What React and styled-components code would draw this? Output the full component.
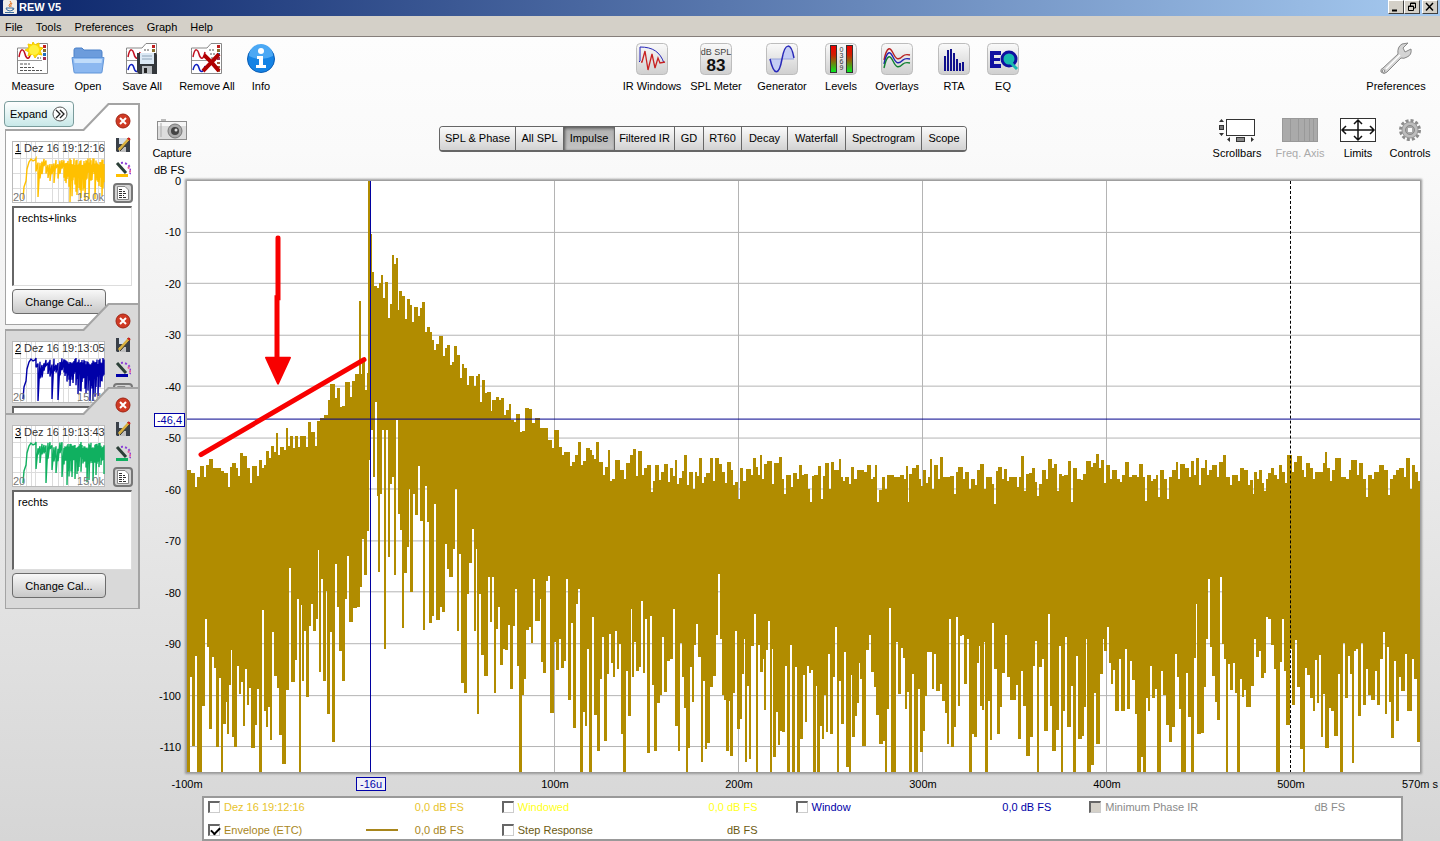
import React, { useState } from 'react';
import styled, { createGlobalStyle, css } from 'styled-components';

const GOLD = '#b18c00';
const FLOOR = 773;

// upper edge of the envelope, x then y
const PEAKS = `186 470 193 473 196 488 199 478 203 466 205 478 208 465 211 459 214 468 218 468 222 471 225 473 229 488
231 467 235 463 237 468 239 476 241 453 244 456 248 468 251 484 255 466 258 476 260 460 263 468 265 465 267 451 270 458
273 446 275 452 277 433 279 455 281 447 285 450 287 428 289 446 291 436 294 448 296 436 299 447 303 436 307 447 309 422
312 432 316 446 319 421 323 418 327 415 329 400 333 384 336 398 338 388 341 407 344 406 348 382 351 397 354 381 357 374
359 374 360 301 361 374 364 360 366 390 368 373 369 180 371 234 373 272 375 286 378 288 380 283 382 275 384 298 386 282
389 318 391 304 393 255 395 264 396 300 397 258 399 310 400 291 403 296 406 319 408 299 411 305 413 322 415 307 419 316
421 308 423 302 426 332 428 327 431 332 433 340 435 350 438 344 441 336 444 356 446 348 448 345 451 365 453 362 455 346
458 355 461 378 463 364 465 368 468 385 470 376 473 376 475 386 477 376 479 374 481 402 483 380 486 393 490 392 491 411
495 400 497 397 500 400 503 398 505 415 509 410 510 404 512 420 515 422 519 414 521 432 524 431 526 408 530 409 533 423
538 418 541 428 546 428 549 440 553 448 557 430 560 447 563 455 567 452 571 466 574 462 577 455 580 442 582 465 585 461
588 448 591 450 593 455 595 459 598 442 600 462 602 462 604 475 607 467 609 450 611 482 614 480 617 460 621 470 625 480
629 463 632 455 635 449 637 476 640 451 643 475 646 468 649 465 652 493 654 482 656 465 660 481 663 472 666 464 669 483
671 468 674 476 676 460 678 485 681 479 683 471 685 455 688 486 690 472 694 490 696 472 698 476 701 458 703 484 705 478
709 473 711 458 714 482 717 458 720 464 723 472 726 484 729 462 732 470 734 486 737 483 739 500 742 468 744 482 749 469
752 475 755 458 757 467 759 475 761 455 763 480 766 464 770 461 773 485 775 463 778 463 781 457 783 480 785 495 788 475
792 488 794 473 798 480 800 465 803 475 807 474 809 490 811 503 813 477 817 475 820 466 822 500 824 476 828 463 830 490
832 462 835 470 838 470 840 459 842 478 844 482 847 478 850 485 852 467 855 480 860 470 865 472 870 465 872 480 874 478
876 465 878 503 881 491 884 478 886 490 889 475 892 475 895 478 899 478 903 475 905 480 907 466 908 503 911 474 915 468
918 465 920 480 922 487 924 470 927 484 929 478 931 459 933 490 936 465 939 480 942 457 944 478 948 478 953 477 955 495
957 472 961 467 964 480 967 472 970 490 973 480 976 486 979 470 983 464 985 490 988 478 993 485 995 505 997 471 1000 467
1003 480 1006 469 1008 482 1012 478 1015 478 1018 488 1020 478 1023 456 1025 492 1028 474 1031 473 1033 468 1036 483
1038 497 1041 485 1044 470 1047 480 1051 459 1053 468 1055 464 1058 492 1060 474 1063 477 1067 475 1069 461 1072 503
1075 468 1078 480 1082 481 1085 474 1089 461 1092 467 1095 463 1098 454 1100 468 1102 460 1105 484 1108 465 1111 480
1114 470 1118 480 1121 483 1124 475 1127 462 1130 478 1135 475 1138 478 1141 464 1144 478 1146 502 1149 475 1152 482
1155 480 1157 475 1159 498 1163 470 1165 480 1168 500 1171 478 1175 470 1177 462 1179 480 1182 464 1186 468 1190 478
1193 461 1195 475 1197 458 1200 486 1204 468 1206 460 1208 475 1211 470 1214 465 1218 478 1222 462 1225 455 1227 478
1231 486 1234 475 1239 482 1241 468 1245 470 1249 486 1252 481 1254 495 1255 472 1258 480 1260 470 1263 484 1265 492
1267 480 1270 473 1273 468 1275 475 1278 480 1280 465 1283 472 1286 484 1290 455 1293 472 1296 462 1300 456 1303 470
1305 478 1308 463 1311 468 1314 480 1318 472 1322 472 1324 463 1326 452 1328 468 1331 482 1334 470 1338 458 1342 478
1348 480 1350 470 1354 460 1358 475 1361 463 1364 480 1367 498 1370 475 1373 480 1377 472 1382 465 1385 470 1389 496
1392 480 1395 475 1398 470 1402 468 1405 478 1408 458 1411 490 1413 465 1416 472 1419 482`;

// lower edge of the envelope
const DIPS = `186 746 188 773 191 678 193 747 196 657 198 773 201 773 203 707 206 620 208 648 211 730 213 658 215 669
218 748 220 679 222 773 224 725 227 703 228 735 230 686 232 651 233 738 236 748 238 667 240 695 242 683 244 727 246 670
248 706 250 689 253 749 256 726 258 690 260 773 263 611 265 712 267 728 269 708 271 741 273 633 276 677 278 689 281 736
284 765 287 691 290 569 294 683 296 661 298 600 300 773 302 606 303 682 305 632 308 698 310 627 312 605 314 632 317 620
318 551 320 673 322 580 324 682 327 592 328 715 331 633 333 743 336 565 338 608 341 652 344 682 346 600 348 557 351 623
354 609 358 608 361 588 362 518 363 540 366 576 367 532 370 460 372 430 374 478 376 402 378 497 379 573 381 495 383 430
385 650 387 430 389 558 391 485 393 478 395 576 397 420 399 515 401 531 403 629 405 574 408 548 409 490 412 593 414 495
417 516 419 466 422 522 424 631 426 487 428 523 430 624 433 617 435 505 438 621 441 608 443 613 446 545 448 570 451 578
454 550 456 490 458 632 460 555 463 684 466 694 468 595 470 564 473 530 475 632 476 550 478 715 480 595 483 656 486 677
489 578 491 623 493 578 495 694 497 630 499 608 502 666 504 650 506 651 509 626 512 690 514 627 516 590 518 667 520 773
523 696 525 680 527 631 530 628 532 644 534 580 538 622 541 600 542 663 545 674 547 582 549 577 551 714 555 643 558 671
560 640 562 669 565 662 567 580 570 701 572 624 574 729 577 605 579 590 582 773 584 713 586 727 588 650 591 773 593 618
596 716 599 752 601 680 603 638 606 742 608 675 610 635 612 664 614 678 616 632 618 670 620 645 622 735 624 773 627 672
630 717 631 610 633 678 635 643 637 672 640 668 642 602 644 674 646 620 649 754 651 617 653 686 655 752 658 704 661 696
663 638 666 693 668 662 671 660 674 610 677 727 679 752 681 644 683 678 685 709 687 773 689 749 691 668 693 703 695 646
697 625 700 658 702 763 704 682 706 750 708 744 711 688 714 677 717 636 719 575 721 640 723 696 725 701 728 752 730 702
731 757 734 694 736 632 739 730 741 720 743 675 745 640 746 763 748 687 750 760 752 647 755 615 757 773 759 646 762 673
763 660 765 711 767 651 769 622 771 773 772 650 775 758 777 713 779 746 781 732 784 733 786 667 789 773 791 646 794 773
796 668 799 773 801 740 804 676 806 723 808 667 810 674 812 671 815 773 816 687 819 773 821 727 823 740 825 696 827 733
829 655 831 735 834 678 836 628 838 773 840 682 843 725 845 653 848 768 850 773 852 676 853 738 856 717 858 704 860 664
861 680 864 747 867 651 870 636 873 673 875 688 878 716 881 745 884 742 886 773 888 710 890 609 892 773 895 773 897 643
899 695 902 649 904 659 906 710 908 693 911 773 913 675 916 773 919 690 921 753 924 732 926 697 928 653 931 653 933 690
935 655 938 692 941 685 944 702 946 714 948 745 950 620 952 748 955 728 957 618 959 707 961 637 963 636 965 685 968 640
970 773 973 735 975 738 978 664 979 647 981 707 983 711 985 643 986 773 989 702 991 741 993 624 996 670 999 735 1001 708
1003 674 1006 636 1009 678 1012 701 1014 701 1017 686 1020 740 1022 672 1025 707 1028 757 1031 738 1034 667 1036 642
1038 773 1040 668 1043 660 1046 732 1049 615 1051 707 1054 752 1057 731 1060 647 1062 773 1064 712 1066 638 1069 728
1072 687 1075 773 1077 657 1080 740 1083 737 1085 708 1086 640 1089 773 1092 766 1095 694 1098 745 1101 675 1104 640
1105 652 1108 628 1110 664 1112 685 1114 671 1117 712 1120 660 1123 712 1126 650 1128 710 1131 662 1134 681 1136 715
1139 773 1142 758 1144 773 1147 699 1149 712 1151 667 1154 699 1156 690 1159 773 1162 672 1165 696 1168 726 1171 743
1173 728 1176 655 1178 678 1180 710 1184 773 1187 674 1190 718 1192 773 1195 659 1196 605 1199 735 1202 734 1205 688
1207 640 1209 580 1211 648 1214 677 1217 703 1218 721 1221 578 1223 645 1225 660 1227 773 1229 665 1231 691 1234 664
1236 694 1238 773 1241 680 1243 698 1245 691 1249 708 1252 687 1255 640 1258 658 1260 652 1262 679 1265 674 1267 618
1270 620 1273 646 1275 670 1278 773 1281 663 1283 620 1285 672 1289 726 1291 650 1294 706 1296 641 1299 688 1302 750
1304 773 1306 669 1309 676 1312 699 1314 712 1316 661 1318 704 1320 656 1322 738 1324 695 1327 749 1330 709 1333 712
1336 737 1339 675 1341 773 1344 644 1347 699 1349 657 1351 675 1353 764 1355 652 1357 650 1359 717 1362 644 1365 706
1367 670 1370 696 1373 701 1376 672 1378 706 1381 660 1384 633 1386 715 1388 648 1390 703 1392 739 1395 662 1398 722
1400 678 1403 692 1406 655 1408 712 1411 712 1413 660 1416 680 1418 743`;

const toPairs = (text) => {
  const n = text.trim().split(/\s+/).map(Number);
  const out = [];
  for (let i = 0; i < n.length; i += 2) out.push([n[i], n[i + 1]]);
  return out;
};

// every sample becomes a flat step; the one reaching further out gets the bigger share of the gap
const toSteps = (pairs, dir) => {
  const edge = (a, b) => {
    const share = (a[1] - b[1]) * dir > 0 ? 0.7 : 0.3;
    return Math.round(a[0] + (b[0] - a[0]) * share);
  };
  return pairs.map((p, i) => [
    i ? edge(pairs[i - 1], p) : 186,
    i < pairs.length - 1 ? edge(p, pairs[i + 1]) : 1421,
    p[1],
  ]);
};

const envelopePath = () => {
  const top = toSteps(toPairs(PEAKS), -1);
  const bottom = toSteps(toPairs(DIPS), 1).reverse();
  return 'M186 500' + top.map(([a, b, y]) => `L${a} ${y}L${b} ${y}`).join('')
    + bottom.map(([a, b, y]) => `L${b} ${y}L${a} ${y}`).join('') + 'Z';
};
const ENVELOPE = envelopePath();

const thumbPath = (seed, dips) => {
  let s = seed;
  const rnd = () => { s = (s * 16807) % 2147483647; return s / 2147483647; };
  let d = 'M11 58L12 46L14 40L15 28L17 21L19 18L21 20L23 19';
  for (let x = 24; x < 93; x += x < 52 ? 2 : 1) {
    const top = 17 + rnd() * 7;
    const low = dips[x] || top + (x < 52 ? 5 + rnd() * 12 : 13 + rnd() * rnd() * 28);
    d += `L${x} ${top.toFixed(1)}L${x} ${low.toFixed(1)}`;
  }
  return d;
};

const MEASUREMENTS = [
  { id: 1, name: 'Dez 16 19:12:16', note: 'rechts+links', color: '#ffc000', active: true,
    path: thumbPath(4711, { 26: 56, 38: 40, 42: 42, 58: 61, 65: 54, 69: 57, 73: 60, 77: 58, 83: 58, 90: 55 }) },
  { id: 2, name: 'Dez 16 19:13:05', note: 'links', color: '#0000a8',
    path: thumbPath(991, { 20: 42, 26: 60, 40: 58, 46: 59, 58: 45, 68: 50, 74: 52, 78: 60, 81: 60, 86: 55 }) },
  { id: 3, name: 'Dez 16 19:13:43', note: 'rechts', color: '#10b060',
    path: thumbPath(2029, { 24: 44, 34: 58, 40: 45, 44: 48, 50: 52, 55: 60, 60: 52, 66: 46, 77: 55, 84: 50 }) },
];

const TABS = [
  ['SPL & Phase', 76], ['All SPL', 48], ['Impulse', 51], ['Filtered IR', 60], ['GD', 29], ['RT60', 38],
  ['Decay', 46], ['Waterfall', 58], ['Spectrogram', 76], ['Scope', 44],
];

const LEGEND = [
  { label: 'Dez 16 19:12:16', value: '0,0 dB FS', color: '#e8c32c' },
  { label: 'Windowed', value: '0,0 dB FS', color: '#ffff20' },
  { label: 'Window', value: '0,0 dB FS', color: '#0000a8' },
  { label: 'Minimum Phase IR', value: 'dB FS', color: '#8a8a8a', disabled: true },
  { label: 'Envelope (ETC)', value: '0,0 dB FS', color: '#a8861c', line: true },
  { label: 'Step Response', value: 'dB FS', color: '#6b5a10' },
];

/* ---------- icons ---------- */

const Sheet = ({ split }) => (
  <g>
    <path d="M1.5 8.5V31.5H31.5V1.5H21L17 6H1.5Z" fill="#fff" stroke="#888" />
    <path d="M3 15C5 4 8 8 9 12S13 20 15 10" fill="none" stroke="#c01020" strokeWidth="1.5" />
    <path d="M2 18.5H26" stroke="#999" />
    {split
      ? <path d="M3 28C5 20 8 22 9 26S13 32 15 24" fill="none" stroke="#1020c0" strokeWidth="1.5" />
      : <path d="M4 22H14M4 25.5H18M4 28.5H26" stroke="#555" strokeDasharray="3 1" />}
    <path d="M19 8H25M20 12H25M21 16H25" stroke="#555" strokeDasharray="2 1" />
    <rect x="27" y="3" width="3" height="3" fill="#c02020" />
    <rect x="27" y="7" width="3" height="3" fill="#887030" />
    <rect x="27" y="11" width="3" height="3" fill="#2070c0" />
    <rect x="27" y="15" width="3" height="3" fill="#a03050" />
    {split && <path d="M27 21H30M27 25H30M27 29H30" stroke="#a06040" strokeWidth="2" />}
  </g>
);

const Tile = ({ children }) => (
  <svg width="34" height="34" viewBox="0 0 34 34" aria-hidden="true">
    <defs>
      <linearGradient id="tile" x1="0" y1="0" x2="0" y2="1">
        <stop offset="0" stopColor="#fafafa" /><stop offset="1" stopColor="#cfcfcf" />
      </linearGradient>
      <linearGradient id="meter" x1="0" y1="0" x2="0" y2="1">
        <stop offset="0" stopColor="#f00000" /><stop offset=".35" stopColor="#d02000" /><stop offset="1" stopColor="#00f020" />
      </linearGradient>
    </defs>
    <rect x="1.5" y="1.5" width="31" height="31" rx="4" fill="url(#tile)" stroke="#bdbdbd" />
    {children}
  </svg>
);

const Picture = ({ children, w = 34, h = 34 }) => (
  <svg width={w} height={h} viewBox={`0 0 ${w} ${h}`} aria-hidden="true">{children}</svg>
);

const MeasureIcon = () => (
  <Picture>
    <Sheet />
    <path d="M17 0L19 3L23 1L23 5L27 6L24 9L26 13L22 12L19 16L17 12L12 14L13 10L9 8L13 6L12 2L16 3Z" fill="#ffe000" stroke="#f4c800" />
    <circle cx="18" cy="8" r="5" fill="#fff040" />
  </Picture>
);
const OpenIcon = () => (
  <Picture>
    <path d="M3 17V8Q3 6 5 6H11L13 8H29Q31 8 31 10V17Z" fill="#6c9cdc" stroke="#4a80c8" />
    <path d="M1 15.5H33L31 30Q31 31 30 31H4Q3 31 3 30Z" fill="#8cb8f0" stroke="#5f94d8" />
    <path d="M3 17H31L30.5 21H3.5Z" fill="#c0dcfa" />
  </Picture>
);
const SaveIcon = () => (
  <Picture>
    <Sheet split />
    <path d="M12 11H31L32 13V32H14L12 30Z" fill="#34383c" />
    <rect x="15" y="11" width="14" height="11" fill="#dce9f5" />
    <path d="M17 14H27M17 17H27" stroke="#8ea4b8" />
    <rect x="17" y="24" width="10" height="8" fill="#b8bcc0" />
    <rect x="19" y="26" width="3" height="5" fill="#222" />
  </Picture>
);
const RemoveIcon = () => (
  <Picture>
    <Sheet split />
    <path d="M14 13Q22 20 29 29M29 12Q22 20 13 29" fill="none" stroke="#b00000" strokeWidth="4" />
  </Picture>
);
const InfoIcon = () => (
  <Picture>
    <circle cx="17" cy="17" r="13.5" fill="#1583e4" stroke="#0a5cb4" />
    <path d="M5 14A12 12 0 0 1 29 14Q17 20 5 14Z" fill="#4ba8f4" />
    <circle cx="17" cy="9" r="3" fill="#fff" />
    <path d="M13 14H19V23H22V26H12V23H15V17H13Z" fill="#fff" />
  </Picture>
);
const IrIcon = () => (
  <Tile>
    <path d="M4 20L5 19V5C18 5 25 10 29 21" fill="none" stroke="#2525b8" />
    <path d="M6 20L7 20L10 9L13 28L17 12L20 26L23 16L25 21L30 20" fill="none" stroke="#c82020" strokeWidth="1.3" />
  </Tile>
);
const SplIcon = () => (
  <Tile>
    <text x="17" y="13" textAnchor="middle" fontSize="9" fill="#444">dB SPL</text>
    <text x="17" y="29" textAnchor="middle" fontSize="17" fontWeight="bold" fill="#111">83</text>
  </Tile>
);
const GeneratorIcon = () => (
  <Tile>
    <path d="M5 17H17C14 34 9 34 5 17ZM17 17C20 0 25 0 29 17Z" fill="#c4cdf4" />
    <path d="M5 17H29" stroke="#98a4d8" />
    <path d="M5 17C9 34 14 34 17 17S26 0 29 16" fill="none" stroke="#2828b8" strokeWidth="1.5" />
  </Tile>
);
const LevelsIcon = () => (
  <Tile>
    <rect x="6.5" y="3.5" width="6" height="27" fill="url(#meter)" stroke="#333" />
    <rect x="22.5" y="3.5" width="6" height="27" fill="url(#meter)" stroke="#333" />
    {['0', '3', '6', '9'].map((n, i) => (
      <text key={n} x="17.5" y={10 + i * 6} textAnchor="middle" fontSize="7" fill="#333">{n}</text>
    ))}
  </Tile>
);
const OverlaysIcon = () => (
  <Tile>
    {['#b82020', '#2020b0', '#108030'].map((c, i) => (
      <path key={c} transform={`translate(0 ${i * 4})`} d="M4 18C7 4 10 5 13 11S18 19 23 14Q25 12 30 13" fill="none" stroke={c} strokeWidth="1.4" />
    ))}
  </Tile>
);
const RtaIcon = () => (
  <Tile>
    {[15, 21, 22, 18, 12, 8, 9].map((h, i) => (
      <rect key={i} x={7 + i * 3} y={29 - h} width="2" height={h} fill="#10108c" />
    ))}
  </Tile>
);
const EqIcon = () => (
  <Tile>
    <path d="M4 9H15V13H8V16H14V19H8V22H15V26H4Z" fill="#1010a0" />
    <circle cx="23" cy="17" r="7" fill="#18b8b0" stroke="#1010a0" strokeWidth="3" />
    <path d="M24 20L31 27" stroke="#18b8b0" strokeWidth="3" />
  </Tile>
);
const WrenchIcon = () => (
  <Picture>
    <path d="M2 30Q1 27 4 26L19 12Q18 5 23 2L29 1L24 6L26 10L32 7Q33 13 28 15Q25 17 22 16L8 30Q5 33 2 30Z" fill="#d4d4d4" stroke="#888" />
    <path d="M7 27L21 13" stroke="#fff" strokeWidth="1.5" />
    <circle cx="4.5" cy="29" r="1.3" fill="#fff" stroke="#888" />
  </Picture>
);
const CameraIcon = () => (
  <Picture w={34} h={26}>
    <rect x="6" y="2" width="5" height="3" fill="#bbb" />
    <rect x="2.5" y="4.5" width="29" height="18" fill="#dcdcdc" stroke="#8c8c8c" />
    <path d="M3 5H31V9H3Z" fill="#f6f6f6" />
    <circle cx="20" cy="14" r="7" fill="#aaa" stroke="#777" />
    <circle cx="20" cy="14" r="4" fill="#444" />
    <circle cx="21" cy="13" r="1.5" fill="#ddd" />
    <path d="M6 6V20" stroke="#aaa" />
  </Picture>
);
const ScrollbarsIcon = () => (
  <Picture w={38} h={26}>
    <rect x="8.5" y="2.5" width="28" height="16" fill="#fff" stroke="#333" />
    <path d="M1 5L3.5 2L6 5ZM1 16L3.5 19L6 16ZM12 20V25L9 22.5ZM33 20V25L36 22.5Z" fill="#333" />
    <rect x="1.5" y="8.5" width="4" height="4" fill="#777" stroke="#333" />
    <rect x="18.5" y="20.5" width="8" height="4" fill="#888" stroke="#333" />
  </Picture>
);
const FreqAxisIcon = () => (
  <Picture w={38} h={26}>
    <rect x="1.5" y="1.5" width="35" height="23" fill="#aaa" stroke="#999" />
    <path d="M9.5 2V24M17.5 2V24M23.5 2V24M28.5 2V24M32.5 2V24" stroke="#999" />
  </Picture>
);
const LimitsIcon = () => (
  <Picture w={38} h={26}>
    <rect x="1.5" y="1.5" width="35" height="23" fill="#fff" stroke="#333" />
    <path d="M3 13H35M19 3V23M7 9L3 13L7 17M31 9L35 13L31 17M15 7L19 3L23 7M15 19L19 23L23 19" fill="none" stroke="#111" strokeWidth="1.5" />
  </Picture>
);
const GearIcon = () => (
  <Picture w={26} h={26}>
    <circle cx="13" cy="13" r="9.5" fill="none" stroke="#8c8c8c" strokeWidth="3" strokeDasharray="3 2" />
    <circle cx="13" cy="13" r="8" fill="#bdbdbd" stroke="#999" />
    <circle cx="13" cy="13" r="4.5" fill="#a8a8a8" stroke="#888" />
    <rect x="11" y="11" width="4" height="4" fill="#fafafa" />
  </Picture>
);
const CloseIcon = () => (
  <Picture w={16} h={16}>
    <circle cx="8" cy="8" r="7" fill="#cf3a24" stroke="#a02414" />
    <path d="M5 5L11 11M11 5L5 11" stroke="#fff" strokeWidth="2" />
  </Picture>
);
const DiskPenIcon = () => (
  <Picture w={16} h={16}>
    <path d="M1 1H15V15H2L1 14Z" fill="#3a4048" />
    <rect x="4" y="1" width="8" height="6" fill="#d4dde8" />
    <rect x="4" y="10" width="7" height="5" fill="#c0c0c0" />
    <path d="M4 13L14 2" stroke="#d8b040" strokeWidth="3" />
    <path d="M5 14L15 3" stroke="#333" />
    <path d="M13 1L15 3" stroke="#d02020" strokeWidth="2" />
  </Picture>
);
const ColorIcon = ({ color }) => (
  <Picture w={16} h={16}>
    <path d="M1 14.5H13" stroke={color} strokeWidth="3" />
    <path d="M2 2L11 12" stroke="#2c4038" strokeWidth="3" />
    <path d="M6 2A8 8 0 0 1 15 13" fill="none" stroke="#8c40d8" strokeWidth="2" strokeDasharray="2 2" />
    <path d="M13 6A8 8 0 0 1 15 13" fill="none" stroke="#e860a0" strokeWidth="2" strokeDasharray="2 2" />
  </Picture>
);
const NotesIcon = () => (
  <Picture w={16} h={16}>
    <path d="M2.5 1.5H10L13.5 5V14.5H2.5Z" fill="#fff" stroke="#888" />
    <path d="M4 4.5H8M4 6.5H10M4 8.5H12M4 10.5H9M4 12.5H12" stroke="#333" strokeDasharray="3 1" />
  </Picture>
);
const JavaIcon = () => (
  <Picture w={14} h={14}>
    <rect width="14" height="14" rx="1" fill="#f0eee8" />
    <path d="M7 1Q9 3 7 4T7 7M9 3Q7 5 8 7" fill="none" stroke="#e07020" />
    <path d="M3 8H10V10Q7 12 4 10ZM10 8Q12 8 10 10M2 12.5H11" fill="none" stroke="#4070a0" />
  </Picture>
);

/* ---------- parts ---------- */

const ToolItem = ({ icon, label, width, disabled }) => (
  <ToolButton type="button" $width={width} disabled={disabled}>{icon}<span>{label}</span></ToolButton>
);

const MeasurementCard = ({ item }) => (
  <Card $active={item.active}>
    <CardTop>
      <Thumb viewBox="0 0 93 62" role="img" aria-label={item.name}>
        <rect x=".5" y=".5" width="92" height="61" fill="#fff" stroke="#bbb" />
        <path d="M1 17.5H92M1 32.5H92M1 47.5H92M8.5 1V61M14.5 1V61M19.5 1V61M23.5 1V61M40.5 1V61M46.5 1V61M51.5 1V61M56.5 1V61M66.5 1V61M76.5 1V61M86.5 1V61" stroke="#dcdcdc" />
        <path d={item.path} fill="none" stroke={item.color} strokeWidth="1.4" />
        <text x="3" y="11" textDecoration="underline" fill="#000">{item.id}</text>
        <text x="12" y="11" fill="#333">{item.name}</text>
        <text x="1" y="60" fill="#777">20</text>
        <text x="92" y="60" textAnchor="end" fill="#777">15,0k</text>
      </Thumb>
      <CardTools>
        <IconButton type="button" aria-label="Remove"><CloseIcon /></IconButton>
        <IconButton type="button" aria-label="Save"><DiskPenIcon /></IconButton>
        <IconButton type="button" aria-label="Trace colour"><ColorIcon color={item.color} /></IconButton>
        <IconButton type="button" aria-label="Notes" $pressed><NotesIcon /></IconButton>
      </CardTools>
    </CardTop>
    <Notes aria-label={`Notes ${item.id}`} defaultValue={item.note} spellCheck="false" />
    <CalButton type="button">Change Cal...</CalButton>
  </Card>
);

const App = () => {
  const [tab, setTab] = useState('Impulse');
  const [checked, setChecked] = useState({ 'Envelope (ETC)': true });

  return (
    <Window>
      <GlobalStyle />
      <TitleBar>
        <JavaIcon />
        <Title>REW V5</Title>
        <WindowButton type="button" aria-label="Minimize"><Picture w={10} h={10}><path d="M1 8.5H6" stroke="#000" strokeWidth="2" /></Picture></WindowButton>
        <WindowButton type="button" aria-label="Restore"><Picture w={10} h={10}><path d="M3.5 4V1H8.5V6H7M1.5 4H6.5V8.5H1.5ZM3 1.5H9M1 4.5H7" fill="none" stroke="#000" /></Picture></WindowButton>
        <WindowButton type="button" aria-label="Close" $apart><Picture w={10} h={10}><path d="M1 1L8 8.5M8 1L1 8.5" stroke="#000" strokeWidth="1.5" /></Picture></WindowButton>
      </TitleBar>
      <MenuBar>
        {['File', 'Tools', 'Preferences', 'Graph', 'Help'].map((m) => <MenuButton type="button" key={m}>{m}</MenuButton>)}
      </MenuBar>

      <Toolbar>
        <ToolGroup $room>
          <ToolItem icon={<MeasureIcon />} label="Measure" width={58} />
          <ToolItem icon={<OpenIcon />} label="Open" width={52} />
          <ToolItem icon={<SaveIcon />} label="Save All" width={56} />
          <ToolItem icon={<RemoveIcon />} label="Remove All" width={74} />
          <ToolItem icon={<InfoIcon />} label="Info" width={34} />
        </ToolGroup>
        <ToolGroup>
          <ToolItem icon={<IrIcon />} label="IR Windows" width={64} />
          <ToolItem icon={<SplIcon />} label="SPL Meter" width={64} />
          <ToolItem icon={<GeneratorIcon />} label="Generator" width={68} />
          <ToolItem icon={<LevelsIcon />} label="Levels" width={50} />
          <ToolItem icon={<OverlaysIcon />} label="Overlays" width={62} />
          <ToolItem icon={<RtaIcon />} label="RTA" width={52} />
          <ToolItem icon={<EqIcon />} label="EQ" width={46} />
        </ToolGroup>
        <ToolGroup>
          <ToolItem icon={<WrenchIcon />} label="Preferences" width={76} />
        </ToolGroup>
      </Toolbar>

      <Main>
        <Sidebar>
          <ExpandButton type="button">
            Expand
            <Picture w={16} h={16}>
              <circle cx="8" cy="8" r="7" fill="#fff" stroke="#555" />
              <path d="M4 4L8 8L4 12M8 4L12 8L8 12" fill="none" stroke="#222" strokeWidth="1.3" />
            </Picture>
          </ExpandButton>
          <Cards>
            {MEASUREMENTS.map((m) => <MeasurementCard key={m.id} item={m} />)}
          </Cards>
        </Sidebar>

        <Graph>
          <GraphBar>
            <ToolItem icon={<CameraIcon />} label="Capture" width={50} />
            <TabBar role="tablist">
              {TABS.map(([name, width]) => (
                <Tab type="button" role="tab" key={name} $width={width} $on={tab === name} aria-selected={tab === name} onClick={() => setTab(name)}>{name}</Tab>
              ))}
            </TabBar>
            <ToolGroup>
              <ToolItem icon={<ScrollbarsIcon />} label="Scrollbars" width={64} />
              <ToolItem icon={<FreqAxisIcon />} label="Freq. Axis" width={62} disabled />
              <ToolItem icon={<LimitsIcon />} label="Limits" width={54} />
              <ToolItem icon={<GearIcon />} label="Controls" width={50} />
            </ToolGroup>
          </GraphBar>

          <Unit>dB FS</Unit>
          <ChartGrid>
            <YAxis>
              {[0, 1, 2, 3, 4, 5, 6, 7, 8, 9, 10, 11].map((n) => <YTick key={n}>{n ? `-${n}0` : '0'}</YTick>)}
              <LevelMark>-46,4</LevelMark>
            </YAxis>
            <Plot viewBox="187 181 1233 592" preserveAspectRatio="none" role="img" aria-label="Impulse envelope">
              <rect x="187" y="181" width="1233" height="592" fill="#fff" />
              <g stroke="#b4b4b4">
                {[1, 2, 3, 4, 5, 6, 7, 8, 9, 10, 11].map((n) => {
                  const y = Math.round(180 + n * 51.55) + 0.5;
                  return <line key={n} x1="187" x2="1420" y1={y} y2={y} />;
                })}
                {[554.5, 738.5, 922.5, 1106.5].map((x) => <line key={x} x1={x} x2={x} y1="181" y2={FLOOR} />)}
              </g>
              <path d={ENVELOPE} fill={GOLD} shapeRendering="crispEdges" />
              <line x1="187" x2="1420" y1="419.5" y2="419.5" stroke="#00008c" />
              <line x1="370.5" x2="370.5" y1="181" y2={FLOOR} stroke="#0000a0" />
              <line x1="1290.5" x2="1290.5" y1="181" y2={FLOOR} stroke="#000" strokeDasharray="3 2" />
              <path d="M278 238L278 298L277 298V362M201 455L364 360" fill="none" stroke="#f80000" strokeWidth="5" strokeLinecap="round" />
              <path d="M266 358H290L278 384Z" fill="#f80000" stroke="#f80000" strokeWidth="2" strokeLinejoin="round" />
            </Plot>
            <XAxis>
              <XTick>-100m</XTick>
              <XTick><CursorMark>-16u</CursorMark></XTick>
              <XTick>100m</XTick>
              <XTick>200m</XTick>
              <XTick>300m</XTick>
              <XTick>400m</XTick>
              <XTick>500m</XTick>
              <XTick>570m s</XTick>
            </XAxis>
          </ChartGrid>

          <Legend>
            {LEGEND.map((l) => (
              <LegendItem key={l.label} $color={l.color}>
                <label>
                  <Check type="checkbox" disabled={l.disabled} checked={!!checked[l.label]} onChange={(e) => setChecked({ ...checked, [l.label]: e.target.checked })} />
                  {l.label}
                </label>
                {l.line ? <Swatch /> : <span />}
                <LegendValue>{l.value}</LegendValue>
              </LegendItem>
            ))}
          </Legend>
        </Graph>
      </Main>
    </Window>
  );
};

export default App;

const GlobalStyle = createGlobalStyle`
  * { box-sizing: border-box; }
  body { margin: 0; }
  body, button, input, textarea, svg {
    font-family: "Liberation Sans", Arial, sans-serif;
    font-size: 11px;
    line-height: 14px;
    color: #000;
  }
  button { padding: 0; border: 0; background: none; }
`

const Window = styled.div`
  display: flex;
  flex-direction: column;
  height: 100vh;
  min-height: 720px;
  background: linear-gradient(#fefefe, #fafafa 18%, #d6d6d6);
`

const TitleBar = styled.header`
  display: flex;
  align-items: center;
  height: 16px;
  padding: 0 2px 2px 3px;
  background: linear-gradient(90deg, #0a246a, #a6caf0);
`

const Title = styled.h1`
  flex: 1;
  margin: 0 0 0 2px;
  font-size: 11px;
  line-height: 14px;
  color: #fff;
`

const WindowButton = styled.button`
  display: flex;
  align-items: center;
  justify-content: center;
  width: 16px;
  height: 14px;
  margin-left: ${p => p.$apart ? '2px' : 0};
  background: #d4d0c8;
  border: 1px solid;
  border-color: #fff #404040 #404040 #fff;
`

const MenuBar = styled.nav`
  display: flex;
  align-items: center;
  gap: 13px;
  height: 21px;
  padding: 2px 0 0 5px;
  background: #d4d0c8;
  border-bottom: 1px solid #857e7a;
`

const MenuButton = styled.button`
  height: 18px;
`

const Toolbar = styled.div`
  display: flex;
  justify-content: space-between;
  height: 64px;
  padding: 5px 6px 0 4px;
`

const ToolGroup = styled.div`
  display: flex;
  padding-right: ${p => p.$room ? '10px' : 0};
`

const ToolButton = styled.button`
  display: flex;
  flex-direction: column;
  align-items: center;
  justify-content: flex-start;
  gap: 3px;
  width: ${p => p.$width}px;
  white-space: nowrap;
  &:disabled { color: #aaa; }
  svg { flex: none; }
`

const Main = styled.main`
  display: flex;
  flex: 1;
  min-height: 0;
`

const Sidebar = styled.aside`
  width: 145px;
  flex: none;
  padding-left: 4px;
`

const ExpandButton = styled.button`
  position: relative;
  z-index: 1;
  display: flex;
  align-items: center;
  justify-content: space-between;
  width: 70px;
  height: 26px;
  padding: 0 5px;
  border: 1px solid #7a9c9c;
  border-radius: 4px;
  background: linear-gradient(#fff, #c8e8e8);
`

const Cards = styled.div`
  display: flex;
  flex-direction: column;
  margin: -24px 0 0 1px;
`

const notch = css`polygon(0 26px, 78px 26px, 103px 0, 100% 0, 100% 100%, 0 100%)`

const Card = styled.section`
  position: relative;
  display: flex;
  flex-direction: column;
  align-items: flex-start;
  gap: 3px;
  width: 135px;
  height: 222px;
  padding: 0 7px;
  background: #a4a4a4;
  clip-path: ${notch};
  &::before {
    content: '';
    position: absolute;
    inset: 2px 2px 1px 1px;
    background: ${p => p.$active ? '#fff' : '#d9d9d9'};
    clip-path: ${notch};
  }
  & > * { position: relative; }
  & + & { margin-top: -22px; }
  & + & + & { margin-top: -138px; }
`

const CardTop = styled.div`
  display: flex;
  align-items: flex-end;
  justify-content: space-between;
  width: 100%;
  height: 100px;
`

const Thumb = styled.svg`
  width: 93px;
  height: 62px;
`

const CardTools = styled.div`
  display: flex;
  flex-direction: column;
  align-items: center;
  gap: 4px;
`

const IconButton = styled.button`
  display: flex;
  align-items: center;
  justify-content: center;
  width: 20px;
  height: 20px;
  ${p => p.$pressed && css`
    border: 2px solid #777;
    border-radius: 4px;
    background: #d4d4d4;
  `}
`

const Notes = styled.textarea`
  width: 120px;
  height: 80px;
  padding: 3px 4px;
  border: 1px solid #ddd;
  border-top: 2px solid #666;
  border-left: 2px solid #666;
  border-radius: 0;
  background: #fff;
  resize: none;
`

const CalButton = styled.button`
  width: 94px;
  height: 25px;
  border: 1px solid #6c6c6c;
  border-radius: 4px;
  background: linear-gradient(#f8f8f8, #c8c8c8);
`

const Graph = styled.div`
  display: flex;
  flex-direction: column;
  flex: 1;
  min-width: 0;
`

const GraphBar = styled.div`
  display: flex;
  align-items: center;
  justify-content: space-between;
  height: 61px;
  padding: 14px 5px 0 2px;
`

const TabBar = styled.div`
  display: flex;
  height: 26px;
  margin-left: 4px;
  border: 1px solid #666;
  border-bottom-width: 2px;
  border-radius: 4px;
  overflow: hidden;
`

const Tab = styled.button`
  width: ${p => p.$width}px;
  white-space: nowrap;
  border-right: 1px solid #666;
  background: ${p => p.$on ? 'linear-gradient(#999, #b4b4b4 20%, #c4c4c4)' : 'linear-gradient(#fafafa, #d2d2d2)'};
  box-shadow: ${p => p.$on ? 'inset 1px 1px 3px #555' : 'none'};
  &:last-child { border-right: 0; }
`

const Unit = styled.div`
  height: 19px;
  padding: 1px 0 0 9px;
`

const ChartGrid = styled.div`
  display: grid;
  grid-template-columns: 42px minmax(0, 1fr) 20px;
  grid-template-rows: minmax(0, 1fr) 24px;
  flex: 1;
  min-height: 0;
`

const YAxis = styled.div`
  position: relative;
  display: grid;
  grid-template-rows: repeat(11, 103fr) 50fr;
  padding-right: 6px;
  text-align: right;
`

const YTick = styled.div`
  height: 0;
  line-height: 0;
`

const LevelMark = styled.output`
  position: absolute;
  top: calc(100% * 464 / 1148);
  right: 2px;
  padding: 0 2px;
  border: 1px solid #0000a8;
  background: #fff;
  color: #0000a8;
  line-height: 12px;
  transform: translateY(-50%);
`

const Plot = styled.svg`
  display: block;
  width: 100%;
  height: 100%;
  box-shadow: 0 0 2px 2px #999;
`

const XAxis = styled.div`
  grid-column: 2;
  display: grid;
  grid-template-columns: repeat(6, 184fr) 129fr 0;
  align-items: center;
`

const XTick = styled.div`
  display: flex;
  justify-content: center;
  width: 0;
  white-space: nowrap;
`

const CursorMark = styled.output`
  padding: 0 3px;
  border: 1px solid #0000a8;
  background: #f0f0f8;
  color: #0000a8;
  line-height: 12px;
`

const Legend = styled.div`
  display: grid;
  grid-template-columns: repeat(4, 1fr);
  align-content: space-between;
  height: 45px;
  margin: 0 37px 0 57px;
  padding: 2px 18px 2px 4px;
  border: 2px solid #999;
  background: #fff;
`

const LegendItem = styled.div`
  display: grid;
  grid-template-columns: 1fr 32px 66px;
  align-items: center;
  padding-right: 38px;
  color: ${p => p.$color};
  label {
    display: flex;
    align-items: center;
    gap: 4px;
  }
`

const Check = styled.input`
  appearance: none;
  width: 12px;
  height: 12px;
  margin: 0;
  border: 1px solid #ccc;
  border-top: 2px solid #666;
  border-left: 2px solid #666;
  background: #fff;
  &:disabled { background: #d4d0c8; }
  &:checked::after {
    content: '';
    display: block;
    width: 7px;
    height: 4px;
    margin: 1px;
    border: solid #000;
    border-width: 0 0 2px 2px;
    transform: rotate(-45deg);
  }
`

const Swatch = styled.span`
  height: 2px;
  background: #a8861c;
`

const LegendValue = styled.span`
  text-align: right;
`
